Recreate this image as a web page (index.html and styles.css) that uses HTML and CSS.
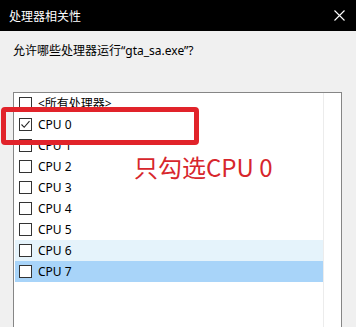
FILE: index.html
```html
<!DOCTYPE html>
<html lang="zh-CN">
<head>
<meta charset="utf-8">
<title>处理器相关性</title>
<link rel="stylesheet" href="styles.css">
</head>
<body>
<div class="window">
  <div class="titlebar">
    <span class="title">处理器相关性</span>
    <svg class="close" width="11" height="11" viewBox="0 0 11 11"><path d="M0.5 0.5 L10.5 10.5 M10.5 0.5 L0.5 10.5" stroke="#fff" stroke-width="1.1" fill="none"/></svg>
  </div>
  <div class="content">
    <p class="prompt">允许哪些处理器运行“gta_sa.exe”?</p>
    <div class="list">
      <div class="rows">
        <div class="row"><span class="box"></span><span class="label">&lt;所有处理器&gt;</span></div>
        <div class="row"><span class="box"><svg width="11" height="11" viewBox="0 0 11 11"><path d="M1.5 5.5 L4.2 8.3 L9.5 2.2" stroke="#222" stroke-width="1.1" fill="none"/></svg></span><span class="label">CPU 0</span></div>
        <div class="row"><span class="box"></span><span class="label">CPU 1</span></div>
        <div class="row"><span class="box"></span><span class="label">CPU 2</span></div>
        <div class="row"><span class="box"></span><span class="label">CPU 3</span></div>
        <div class="row"><span class="box"></span><span class="label">CPU 4</span></div>
        <div class="row"><span class="box"></span><span class="label">CPU 5</span></div>
        <div class="row hover"><span class="box"></span><span class="label">CPU 6</span></div>
        <div class="row selected"><span class="box"></span><span class="label">CPU 7</span></div>
      </div>
    </div>
  </div>
  <div class="mark-box"></div>
  <div class="mark-text">只勾选CPU 0</div>
</div>
</body>
</html>
```
FILE: styles.css
```css
html, body {
  margin: 0;
  padding: 0;
}
body {
  width: 356px;
  height: 327px;
  overflow: hidden;
  background: #f0f0f0;
  font-family: "Noto Sans", "Noto Sans CJK SC", sans-serif;
  font-size: 12px;
  color: #000;
}
.window {
  position: relative;
  width: 356px;
  height: 327px;
  display: flex;
  flex-direction: column;
}
.titlebar {
  height: 31px;
  flex: none;
  background: #000;
  display: flex;
  align-items: center;
  justify-content: space-between;
  padding: 0 11px 0 9px;
}
.title {
  color: #fff;
  font-family: "Noto Sans CJK SC", sans-serif;
  font-size: 12px;
  line-height: 14px;
  margin-top: 1px;
}
.close {
  display: block;
}
.content {
  flex: 1;
  padding: 0 14px 0 13px;
  display: flex;
  flex-direction: column;
}
.prompt {
  margin: 11px 0 0 0;
  font-family: "Noto Sans", "Noto Sans CJK SC", sans-serif;
  font-size: 12px;
  line-height: 17px;
  height: 17px;
}
.list {
  margin-top: 33px;
  flex: 1;
  background: #fff;
  border: 1px solid #868686;
  border-bottom: none;
  padding-left: 1px;
  display: flex;
}
.rows {
  width: 308px;
  border-right: 1px solid #ececec;
}
.row {
  height: 21px;
  display: flex;
  align-items: center;
  padding-left: 4px;
  gap: 6px;
}
.row.hover {
  background: #e5f3fb;
}
.row.selected {
  background: #a8d4f9;
}
.box {
  width: 11px;
  height: 11px;
  border: 1px solid #333;
  background: #fff;
  display: flex;
  align-items: center;
  justify-content: center;
  flex: none;
}
.box svg {
  display: block;
}
.label {
  font-family: "Noto Sans", "Noto Sans CJK SC", sans-serif;
  font-size: 12px;
  line-height: 15px;
  color: #000;
}
.mark-box {
  position: absolute;
  left: 1px;
  top: 107px;
  width: 188px;
  height: 28px;
  border: 5px solid #e1232a;
  border-radius: 4px;
}
.mark-text {
  position: absolute;
  left: 134px;
  top: 150px;
  font-family: "Noto Sans CJK SC", sans-serif;
  font-size: 24px;
  line-height: 34px;
  color: #d7262c;
  white-space: nowrap;
}
```
